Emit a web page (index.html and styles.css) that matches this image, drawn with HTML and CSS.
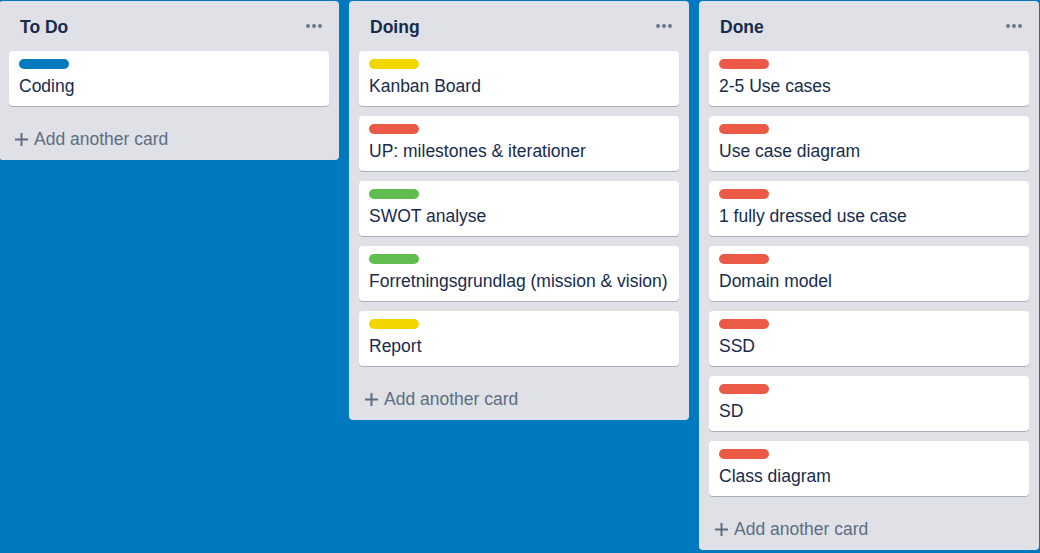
FILE: index.html
```html
<!DOCTYPE html>
<html>
<head>
<meta charset="utf-8">
<link rel="stylesheet" href="styles.css">
</head>
<body>
<div class="board">
  <div class="list">
    <div class="list-header">
      <span class="list-title">To Do</span>
      <svg class="dots" width="16" height="4" viewBox="0 0 16 4"><circle cx="2" cy="2" r="2"/><circle cx="8" cy="2" r="2"/><circle cx="14" cy="2" r="2"/></svg>
    </div>
    <div class="card"><div class="label blue"></div><div class="card-title">Coding</div></div>
    <div class="add"><svg class="plus" width="13" height="13" viewBox="0 0 13 13"><rect x="5.5" y="0" width="2" height="13"/><rect x="0" y="5.5" width="13" height="2"/></svg><span>Add another card</span></div>
  </div>
  <div class="list">
    <div class="list-header">
      <span class="list-title">Doing</span>
      <svg class="dots" width="16" height="4" viewBox="0 0 16 4"><circle cx="2" cy="2" r="2"/><circle cx="8" cy="2" r="2"/><circle cx="14" cy="2" r="2"/></svg>
    </div>
    <div class="card"><div class="label yellow"></div><div class="card-title">Kanban Board</div></div>
    <div class="card"><div class="label red"></div><div class="card-title">UP: milestones &amp; iterationer</div></div>
    <div class="card"><div class="label green"></div><div class="card-title">SWOT analyse</div></div>
    <div class="card"><div class="label green"></div><div class="card-title">Forretningsgrundlag (mission &amp; vision)</div></div>
    <div class="card"><div class="label yellow"></div><div class="card-title">Report</div></div>
    <div class="add"><svg class="plus" width="13" height="13" viewBox="0 0 13 13"><rect x="5.5" y="0" width="2" height="13"/><rect x="0" y="5.5" width="13" height="2"/></svg><span>Add another card</span></div>
  </div>
  <div class="list">
    <div class="list-header">
      <span class="list-title">Done</span>
      <svg class="dots" width="16" height="4" viewBox="0 0 16 4"><circle cx="2" cy="2" r="2"/><circle cx="8" cy="2" r="2"/><circle cx="14" cy="2" r="2"/></svg>
    </div>
    <div class="card"><div class="label red"></div><div class="card-title">2-5 Use cases</div></div>
    <div class="card"><div class="label red"></div><div class="card-title">Use case diagram</div></div>
    <div class="card"><div class="label red"></div><div class="card-title">1 fully dressed use case</div></div>
    <div class="card"><div class="label red"></div><div class="card-title">Domain model</div></div>
    <div class="card"><div class="label red"></div><div class="card-title">SSD</div></div>
    <div class="card"><div class="label red"></div><div class="card-title">SD</div></div>
    <div class="card"><div class="label red"></div><div class="card-title">Class diagram</div></div>
    <div class="add"><svg class="plus" width="13" height="13" viewBox="0 0 13 13"><rect x="5.5" y="0" width="2" height="13"/><rect x="0" y="5.5" width="13" height="2"/></svg><span>Add another card</span></div>
  </div>
</div>
</body>
</html>
```
FILE: styles.css
```css
html, body {
  margin: 0;
  padding: 0;
  height: 100%;
}
body {
  background: #0079bf;
  font-family: "Liberation Sans", Arial, sans-serif;
  font-size: 17.5px;
  color: #172b4d;
  overflow: hidden;
}
.board {
  display: flex;
  align-items: flex-start;
  gap: 10px;
  margin-left: -1px;
  padding-top: 1px;
}
.list {
  flex: none;
  width: 340px;
  background: #dfe1e6;
  border-radius: 4px;
}
.list-header {
  height: 50px;
  box-sizing: border-box;
  padding: 3px 17px 0 21px;
  display: flex;
  align-items: center;
  justify-content: space-between;
}
.list-title {
  font-weight: bold;
  font-size: 17.5px;
  color: #172b4d;
}
.dots {
  fill: #6b778c;
  margin-top: -3px;
}
.card {
  background: #fff;
  margin: 0 10px 10px;
  padding: 7.5px 10px 2.5px;
  border-radius: 4px;
  box-shadow: 0 1px 0 rgba(9, 30, 66, 0.25);
}
.label {
  width: 50px;
  height: 10px;
  border-radius: 5px;
  margin-bottom: 5px;
}
.label.blue { background: #0079bf; }
.label.yellow { background: #f2d600; }
.label.red { background: #eb5a46; }
.label.green { background: #61bd4f; }
.card-title {
  line-height: 25px;
  margin-bottom: 5px;
  color: #172b4d;
}
.add {
  height: 44px;
  box-sizing: border-box;
  padding: 2px 0 0 16px;
  display: flex;
  align-items: center;
  gap: 6px;
  color: #5e6c84;
}
.plus {
  fill: #5e6c84;
  flex: none;
}
```
